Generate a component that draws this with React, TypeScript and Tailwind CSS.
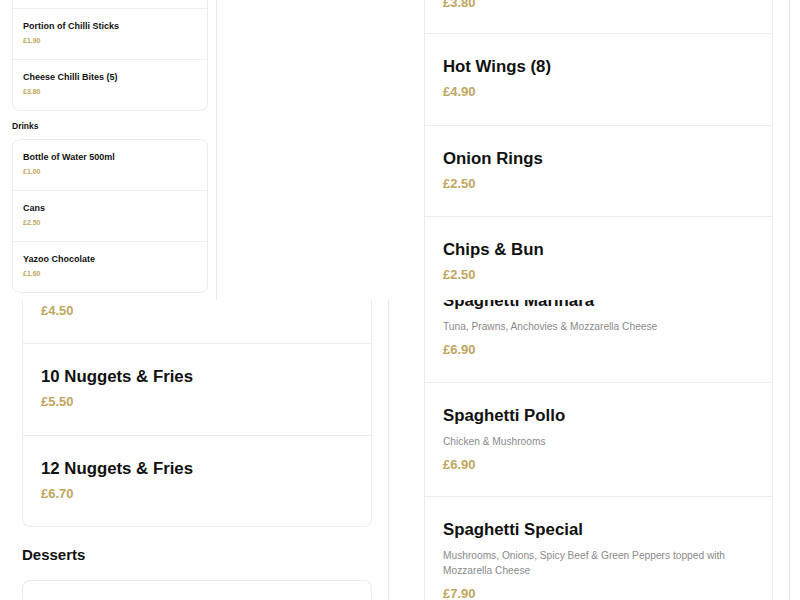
import React from 'react';

type Item = { name: string; price: string; desc?: string };

const font = { fontFamily: '"Liberation Sans", Arial, sans-serif' };

function Row({ item, last }: { item: Item; last?: boolean }) {
    return (
        <div
            className={`px-[18px] pt-[21px] ${item.desc ? 'pb-[21px]' : 'pb-[22.5px]'} ${last ? '' : 'border-b border-[#ececec]'}`}
        >
            <div className="text-[16.8px] leading-6 font-bold text-[#111]">{item.name}</div>
            {item.desc && (
                <div className="mt-[6px] text-[10.2px] leading-[15px] text-[#8a8a8a]">{item.desc}</div>
            )}
            <div className={`${item.desc ? 'mt-[6px]' : 'mt-[3px]'} text-[13px] leading-5 font-bold text-[#c0a65e]`}>
                {item.price}
            </div>
        </div>
    );
}

function SmallRow({ item, last }: { item: Item; last?: boolean }) {
    return (
        <div className={`px-[10px] pt-[11px] pb-[13px] ${last ? '' : 'border-b border-[#efefef]'}`}>
            <div className="text-[9px] leading-[12px] font-bold text-[#111]">{item.name}</div>
            <div className="mt-[4px] text-[7px] leading-[10px] font-bold text-[#c0a65e]">{item.price}</div>
        </div>
    );
}

const snacks: Item[] = [
    { name: 'Portion of Chilli Sticks', price: '£1.90' },
    { name: 'Cheese Chilli Bites (5)', price: '£3.80' },
];

const drinks: Item[] = [
    { name: 'Bottle of Water 500ml', price: '£1.00' },
    { name: 'Cans', price: '£2.50' },
    { name: 'Yazoo Chocolate', price: '£1.60' },
];

const sides: Item[] = [
    { name: 'Hot Wings (8)', price: '£4.90' },
    { name: 'Onion Rings', price: '£2.50' },
    { name: 'Chips & Bun', price: '£2.50' },
];

const nuggets: Item[] = [
    { name: '10 Nuggets & Fries', price: '£5.50' },
    { name: '12 Nuggets & Fries', price: '£6.70' },
];

const pasta: Item[] = [
    { name: 'Spaghetti Pollo', desc: 'Chicken & Mushrooms', price: '£6.90' },
    {
        name: 'Spaghetti Special',
        desc: 'Mushrooms, Onions, Spicy Beef & Green Peppers topped with Mozzarella Cheese',
        price: '£7.90',
    },
];

export default function App() {
    return (
        <div className="w-[800px] h-[600px] overflow-hidden bg-white" style={font}>
            {/* top band */}
            <div className="flex h-[300px] overflow-hidden">
                <div className="w-[217px] shrink-0 border-r border-[#e8e8e8] pl-3 pr-2">
                    <div className="border-x border-b border-[#ebebeb] rounded-b-lg">
                        <div className="h-[9px] border-b border-[#efefef]" />
                        {snacks.map((it, i) => (
                            <SmallRow key={it.name} item={it} last={i === snacks.length - 1} />
                        ))}
                    </div>
                    <div className="mt-[10px] mb-[8px] text-[8.5px] leading-[10px] font-bold text-[#111]">Drinks</div>
                    <div className="border border-[#ebebeb] rounded-lg">
                        {drinks.map((it, i) => (
                            <SmallRow key={it.name} item={it} last={i === drinks.length - 1} />
                        ))}
                    </div>
                </div>
                <div className="w-[191px] shrink-0" />
                <div className="w-[382px] shrink-0 border-r border-[#e8e8e8] px-4">
                    <div className="border-x border-[#ebebeb]">
                        <div className="h-[34px] overflow-hidden border-b border-[#ececec] px-[18px]">
                            <div className="-mt-[7px] text-[13px] leading-5 font-bold text-[#c0a65e]">£3.80</div>
                        </div>
                        {sides.map((it) => (
                            <Row key={it.name} item={it} />
                        ))}
                    </div>
                </div>
            </div>

            {/* bottom band */}
            <div className="flex h-[300px] overflow-hidden">
                <div className="ml-[6px] w-[383px] shrink-0 border-r border-[#e8e8e8] px-4">
                    <div className="border-x border-b border-[#ebebeb] rounded-b-lg">
                        <div className="h-[44px] overflow-hidden border-b border-[#ececec] px-[18px]">
                            <div className="mt-[1px] text-[13px] leading-5 font-bold text-[#c0a65e]">£4.50</div>
                        </div>
                        {nuggets.map((it, i) => (
                            <Row key={it.name} item={it} last={i === nuggets.length - 1} />
                        ))}
                    </div>
                    <div className="mt-[18px] mb-[15px] text-[15px] leading-5 font-bold text-[#111]">Desserts</div>
                    <div className="h-[40px] border-x border-t border-[#ebebeb] rounded-t-lg" />
                </div>
                <div className="w-[19px] shrink-0" />
                <div className="w-[382px] shrink-0 border-r border-[#e8e8e8] px-4">
                    <div className="border-x border-[#ebebeb]">
                        <div className="h-[83px] overflow-hidden border-b border-[#ececec] px-[18px]">
                            <div className="-mt-[11px] text-[16.8px] leading-6 font-bold text-[#111]">Spaghetti Marinara</div>
                            <div className="mt-[6px] text-[10.2px] leading-[15px] text-[#8a8a8a]">
                                Tuna, Prawns, Anchovies &amp; Mozzarella Cheese
                            </div>
                            <div className="mt-[6px] text-[13px] leading-5 font-bold text-[#c0a65e]">£6.90</div>
                        </div>
                        {pasta.map((it, i) => (
                            <Row key={it.name} item={it} last={i === pasta.length - 1} />
                        ))}
                    </div>
                </div>
            </div>
        </div>
    );
}
